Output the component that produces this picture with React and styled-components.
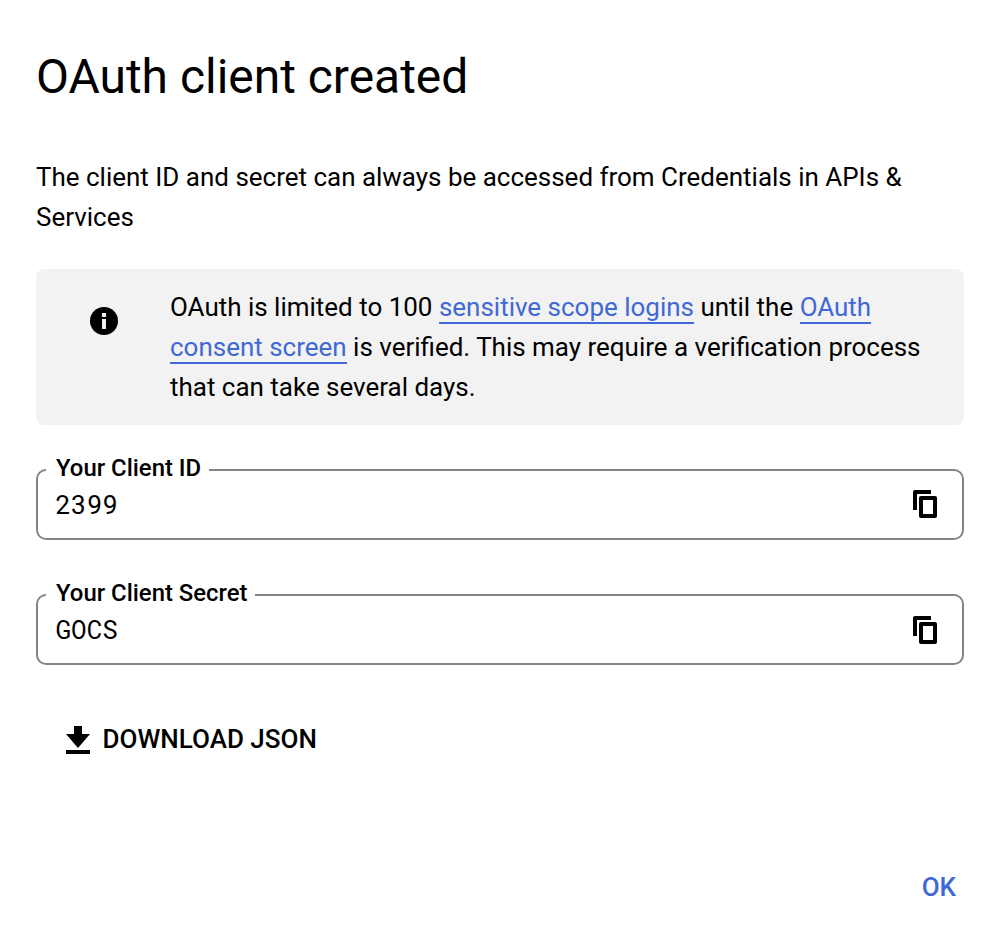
import React from "react";
import styled, { createGlobalStyle } from "styled-components";

const GlobalStyle = createGlobalStyle`
  * { box-sizing: border-box; }
  body { margin: 0; background: #fff; }
`;

const Dialog = styled.main`
  display: flex;
  flex-direction: column;
  width: 1006px;
  height: 950px;
  padding: 45px 42px 0 36px;
  background: #fff;
  color: #000;
  font-family: Roboto, "Liberation Sans", sans-serif;
  font-size: 25.98px;
  line-height: 40px;
  overflow: hidden;
`;

const Title = styled.h1`
  margin: 0;
  font-size: 47.95px;
  line-height: 64px;
  font-weight: 400;
  white-space: nowrap;
`;

const Intro = styled.p`
  margin: 48px 0 0;
  white-space: nowrap;
`;

const Notice = styled.section`
  display: flex;
  align-items: flex-start;
  height: 156px;
  margin-top: 32px;
  padding: 18px 0 0 52px;
  border-radius: 8px;
  background: #f2f2f2;
`;

const NoticeIcon = styled.svg`
  flex: none;
  width: 32px;
  height: 32px;
  margin: 18px 50px 0 0;
`;

const NoticeText = styled.p`
  margin: 0;
  white-space: nowrap;
`;

const Link = styled.a`
  color: #4169d5;
  text-decoration: none;
  border-bottom: 2px solid #4169d5;
`;

const Field = styled.fieldset`
  display: flex;
  min-width: 0;
  height: 86px;
  margin: ${(p) => p.$top}px 0 0;
  padding: 0 25px 0 17.5px;
  border: 2px solid #80868b;
  border-radius: 10px;
`;

const Legend = styled.legend`
  margin-left: -9.5px;
  padding: 0 7.5px 4px 10px;
  font-size: 23.9px;
  line-height: 28px;
  font-weight: 500;
`;

const FieldRow = styled.div`
  display: flex;
  flex: 1;
  align-items: center;
  justify-content: space-between;
  height: 36px;
`;

const Value = styled.span`
  font-family: "Roboto Mono", "Liberation Mono", monospace;
`;

const IconButton = styled.button`
  display: flex;
  padding: ${(p) => p.$drop || 0}px 0 0;
  border: 0;
  background: none;
`;

const DownloadButton = styled.button`
  display: flex;
  align-items: center;
  align-self: flex-start;
  gap: 12.6px;
  margin: 54px 0 0 30px;
  padding: 0;
  border: 0;
  background: none;
  color: #000;
  font: 500 26px/40px Roboto, "Liberation Sans", sans-serif;
`;

const DownloadIcon = styled.svg`
  width: 24px;
  height: 28px;
  margin-top: 2px;
`;

const OkButton = styled.button`
  align-self: flex-end;
  margin: 108px 8px 0 0;
  padding: 0;
  border: 0;
  background: none;
  color: #4169d5;
  font: 500 26px/40px Roboto, "Liberation Sans", sans-serif;
`;

const CopyIcon = () => (
  <svg width="24" height="28" viewBox="0 0 24 28" aria-hidden="true">
    <path d="M0 20V2Q0 0 2 0H18V4H4V20Z" />
    <path d="M8 6H22Q24 6 24 8V26Q24 28 22 28H8Q6 28 6 26V8Q6 6 8 6ZM10 10V24H20V10Z" fillRule="evenodd" />
  </svg>
);

const CopyField = ({ label, value, top, iconDrop }) => (
  <Field $top={top}>
    <Legend>{label}</Legend>
    <FieldRow>
      <Value>{value}</Value>
      <IconButton aria-label={`Copy ${label}`} $drop={iconDrop}><CopyIcon /></IconButton>
    </FieldRow>
  </Field>
);

export default function App() {
  return (
    <>
      <GlobalStyle />
      <Dialog>
        <Title>OAuth client created</Title>
        <Intro>
          The client ID and secret can always be accessed from Credentials in APIs &amp;
          <br />
          Services
        </Intro>
        <Notice>
          <NoticeIcon viewBox="0 0 32 32" aria-hidden="true">
            <circle cx="16" cy="16" r="14" />
            <path d="M14 8h4v4h-4zM14 14h4v10h-4z" fill="#f2f2f2" />
          </NoticeIcon>
          <NoticeText>
            OAuth is limited to 100 <Link>sensitive scope logins</Link> until the <Link>OAuth</Link>
            <br />
            <Link>consent screen</Link> is verified. This may require a verification process
            <br />
            that can take several days.
          </NoticeText>
        </Notice>
        <CopyField label="Your Client ID" value="2399" top={29} />
        <CopyField label="Your Client Secret" value="GOCS" top={39} iconDrop={2} />
        <DownloadButton>
          <DownloadIcon viewBox="0 0 24 28" aria-hidden="true">
            <path d="M8 0H16V8H24L12 22L0 8H8ZM0 24H24V28H0Z" />
          </DownloadIcon>
          DOWNLOAD JSON
        </DownloadButton>
        <OkButton>OK</OkButton>
      </Dialog>
    </>
  );
}
